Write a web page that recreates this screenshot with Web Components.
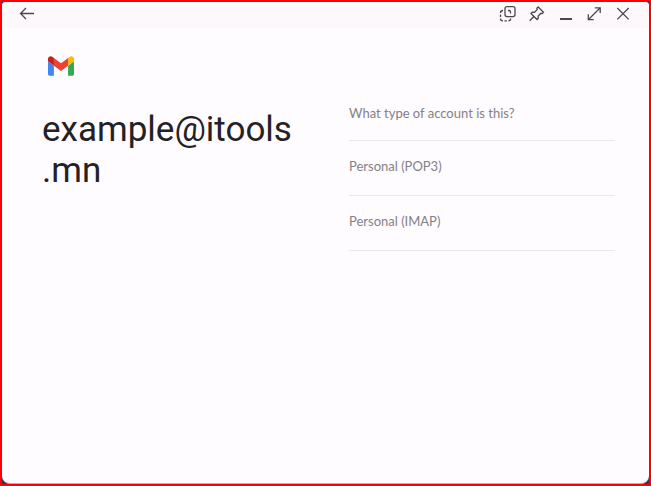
<!DOCTYPE html>
<html lang="en">
<head>
<meta charset="utf-8">
<title>Account setup</title>
<style>
  html, body {
    height: 100%;
    margin: 0;
  }

  body {
    font-family: Lato, "Open Sans", sans-serif;
    color: #858086;
  }
</style>
</head>
<body>
<app-window>
  <window-bar slot="bar"></window-bar>
  <account-setup>
    <mail-logo slot="logo"></mail-logo>
    <span slot="email">example@itools<wbr>.mn</span>
    <span slot="question">What type of account is this?</span>
    <account-option>Personal (POP3)</account-option>
    <account-option>Personal (IMAP)</account-option>
  </account-setup>
</app-window>

<script>
const makeTemplate = (html) => {
  const template = document.createElement('template');
  template.innerHTML = html;
  return template;
};

const windowTemplate = makeTemplate(`
<style>
  :host {
    display: block;
    box-sizing: border-box;
    height: 100%;
    border: 2px solid #ff0000;
    background: #3a2d5c;
  }

  .window {
    box-sizing: border-box;
    height: 100%;
    overflow: hidden;
    border-bottom: 1px solid #dba0ac;
    border-radius: 4px 4px 8px 8px;
    background: #fefcff;
  }
</style>
<div class="window">
  <slot name="bar"></slot>
  <slot></slot>
</div>
`);

const barTemplate = makeTemplate(`
<style>
  :host {
    display: flex;
    align-items: flex-start;
    justify-content: space-between;
    height: 24px;
    padding: 2px 16px 0 15px;
    background: #fdf8fc;
  }

  .controls {
    display: flex;
    gap: 9px;
  }

  button {
    display: block;
    width: 20px;
    height: 20px;
    padding: 0;
    border: 0;
    background: none;
    color: #4c474d;
  }

  svg {
    display: block;
    fill: none;
    stroke: currentColor;
    stroke-width: 1.3;
  }
</style>
<button type="button" aria-label="Back">
  <svg width="20" height="20" viewBox="0 0 20 20"><path d="M17 9.500H3.500M9 4 3.500 9.500 9 15"/></svg>
</button>
<div class="controls">
  <button type="button" aria-label="Capture">
    <svg width="20" height="20" viewBox="0 0 20 20">
      <rect x="8" y="2.600" width="10" height="10" rx="2"/>
      <path d="M11 6.500h1q1.500 0 1.500 1.500V9.500"/>
      <path d="M6 6.500Q3.500 6.500 3.500 9M3.500 10.500v2.400M3.500 14.500Q3.500 16.800 6 16.800M7.500 16.800h2.400M11.500 16.800q2.200 0 2.200-2.300"/>
    </svg>
  </button>
  <button type="button" aria-label="Pin">
    <svg width="20" height="20" viewBox="0 0 20 20">
      <path d="M12.200 3 17.500 8.300 16.200 9.600 14.900 9.300 12.200 12 12.300 14.200 11 15.500 5 9.500 6.300 8.200 8.500 8.300 11.200 5.600 10.900 4.300ZM8 12.500 3.700 16.800"/>
    </svg>
  </button>
  <button type="button" aria-label="Minimize">
    <svg width="20" height="20" viewBox="0 0 20 20"><path d="M5 15h12" stroke-width="2"/></svg>
  </button>
  <button type="button" aria-label="Maximize">
    <svg width="20" height="20" viewBox="0 0 20 20"><path d="M4.500 15.500 16 4M10.800 3.800H16.200v5.200M4.300 10.300v5.400h5.400"/></svg>
  </button>
  <button type="button" aria-label="Close">
    <svg width="20" height="20" viewBox="0 0 20 20"><path d="M4.300 4l11.400 11.400M15.700 4 4.300 15.400"/></svg>
  </button>
</div>
`);

const logoTemplate = makeTemplate(`
<style>
  :host,
  svg {
    display: block;
  }
</style>
<svg width="26" height="20" viewBox="52 42 88 66" role="img" aria-label="Gmail">
  <path fill="#4285f4" d="M58 108h14V74L52 59v43c0 3.320 2.690 6 6 6"/>
  <path fill="#34a853" d="M120 108h14c3.320 0 6-2.690 6-6V59l-20 15"/>
  <path fill="#fbbc04" d="M120 48v26l20-15v-8c0-7.420-8.470-11.650-14.400-7.200"/>
  <path fill="#ea4335" d="M72 74V48l24 18 24-18v26L96 92"/>
  <path fill="#c5221f" d="M52 51v8l20 15V48l-5.600-4.200c-5.940-4.450-14.400-.22-14.400 7.200"/>
</svg>
`);

const setupTemplate = makeTemplate(`
<style>
  :host {
    display: grid;
    grid-template-columns: 1fr 1fr;
    gap: 0 41px;
    padding: 28px 34px 24px 40px;
  }

  .logo {
    grid-column: 1 / -1;
    padding: 0 6px 29px;
  }

  h1 {
    margin: 0;
    padding-top: 4px;
    font: 400 35px/41px Roboto, sans-serif;
    color: #242126;
    overflow-wrap: anywhere;
  }

  h2 {
    margin: 0;
    padding-bottom: 19px;
    border-bottom: 1px solid #ebe8ec;
    font-size: 13px;
    font-weight: 400;
    line-height: 16px;
  }
</style>
<div class="logo"><slot name="logo"></slot></div>
<h1><slot name="email"></slot></h1>
<section>
  <h2><slot name="question"></slot></h2>
  <slot></slot>
</section>
`);

const optionTemplate = makeTemplate(`
<style>
  :host {
    display: block;
    border-bottom: 1px solid #ebe8ec;
  }

  button {
    display: block;
    width: 100%;
    padding: 17px 0 21px;
    border: 0;
    background: none;
    font: inherit;
    font-size: 13px;
    line-height: 16px;
    text-align: left;
    color: inherit;
  }
</style>
<button type="button"><slot></slot></button>
`);

class AppWindow extends HTMLElement {
  constructor() {
    super();
    this.attachShadow({ mode: 'open' });
    this.shadowRoot.appendChild(windowTemplate.content.cloneNode(true));
  }
}

class WindowBar extends HTMLElement {
  constructor() {
    super();
    this.attachShadow({ mode: 'open' });
    this.shadowRoot.appendChild(barTemplate.content.cloneNode(true));
  }
}

class MailLogo extends HTMLElement {
  constructor() {
    super();
    this.attachShadow({ mode: 'open' });
    this.shadowRoot.appendChild(logoTemplate.content.cloneNode(true));
  }
}

class AccountSetup extends HTMLElement {
  constructor() {
    super();
    this.attachShadow({ mode: 'open' });
    this.shadowRoot.appendChild(setupTemplate.content.cloneNode(true));
  }
}

class AccountOption extends HTMLElement {
  constructor() {
    super();
    this.attachShadow({ mode: 'open' });
    this.shadowRoot.appendChild(optionTemplate.content.cloneNode(true));
  }
}

customElements.define('app-window', AppWindow);
customElements.define('window-bar', WindowBar);
customElements.define('mail-logo', MailLogo);
customElements.define('account-setup', AccountSetup);
customElements.define('account-option', AccountOption);
</script>
</body>
</html>
